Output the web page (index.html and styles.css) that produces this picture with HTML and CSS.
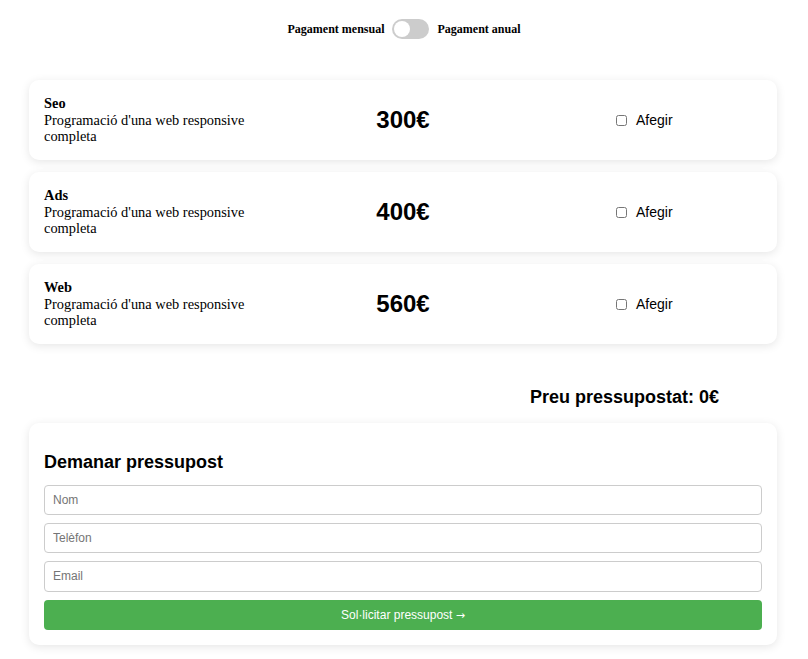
FILE: index.html
```html
<!DOCTYPE html>
<html lang="ca">
<head>
<meta charset="utf-8">
<title>Pressupost</title>
<link rel="stylesheet" href="styles.css">
</head>
<body>
<div class="page">
  <div class="billing">
    <span class="billing-label">Pagament mensual</span>
    <span class="switch"><span class="knob"></span></span>
    <span class="billing-label">Pagament anual</span>
  </div>

  <div class="services">
    <div class="card service">
      <div class="service-info">
        <div class="service-name">Seo</div>
        <div class="service-desc">Programació d'una web responsive completa</div>
      </div>
      <div class="service-price">300€</div>
      <label class="service-add"><input type="checkbox" class="check"> Afegir</label>
    </div>
    <div class="card service">
      <div class="service-info">
        <div class="service-name">Ads</div>
        <div class="service-desc">Programació d'una web responsive completa</div>
      </div>
      <div class="service-price">400€</div>
      <label class="service-add"><input type="checkbox" class="check"> Afegir</label>
    </div>
    <div class="card service">
      <div class="service-info">
        <div class="service-name">Web</div>
        <div class="service-desc">Programació d'una web responsive completa</div>
      </div>
      <div class="service-price">560€</div>
      <label class="service-add"><input type="checkbox" class="check"> Afegir</label>
    </div>
  </div>

  <div class="total">Preu pressupostat: 0€</div>

  <form class="card request">
    <h2 class="request-title">Demanar pressupost</h2>
    <input class="field" type="text" placeholder="Nom">
    <input class="field" type="text" placeholder="Telèfon">
    <input class="field" type="text" placeholder="Email">
    <button class="submit" type="button">Sol·licitar pressupost <span class="arrow">→</span></button>
  </form>
</div>
</body>
</html>
```

FILE: styles.css
```css
html, body {
  margin: 0;
  padding: 0;
  background: #fff;
}

body {
  font-family: "Liberation Serif", "Times New Roman", serif;
  color: #000;
}

.page {
  width: 748px;
  margin: 0 31px 0 29px;
  padding-top: 19px;
  padding-bottom: 14px;
}

.billing {
  display: flex;
  align-items: center;
  justify-content: center;
  gap: 8px;
  height: 20px;
  padding-left: 2px;
}

.billing-label {
  font-weight: bold;
  font-size: 12px;
}

.switch {
  position: relative;
  display: inline-block;
  width: 37px;
  height: 20px;
  border-radius: 10px;
  background: #ccc;
}

.knob {
  position: absolute;
  left: 2px;
  top: 2px;
  width: 16px;
  height: 16px;
  border-radius: 50%;
  background: #fff;
}

.services {
  margin-top: 41px;
  display: flex;
  flex-direction: column;
  gap: 12px;
}

.card {
  background: #fff;
  border-radius: 10px;
  box-shadow: 0 2px 10px rgba(0, 0, 0, 0.1);
}

.service {
  display: grid;
  grid-template-columns: 1fr 1fr 1fr;
  align-items: center;
  padding: 15px;
  height: 50px;
}

.service-info {
  font-size: 14.4px;
  line-height: 16.5px;
}

.service-name {
  font-weight: bold;
}

.service-price {
  text-align: center;
  font-family: "Liberation Sans", Arial, sans-serif;
  font-weight: bold;
  font-size: 24px;
}

.service-add {
  display: flex;
  align-items: center;
  justify-content: center;
  font-family: "Liberation Sans", Arial, sans-serif;
  font-size: 14px;
  padding-left: 4px;
}

.check {
  margin: 0 9px 0 0;
  width: 11px;
  height: 11px;
}

.total {
  margin-top: 43px;
  height: 21px;
  font-family: "Liberation Sans", Arial, sans-serif;
  font-weight: bold;
  font-size: 18px;
  text-align: right;
  padding-right: 58px;
}

.request {
  margin-top: 15px;
  padding: 15px;
  display: flex;
  flex-direction: column;
  gap: 8px;
}

.request-title {
  margin: 14px 0 4px;
  font-family: "Liberation Sans", Arial, sans-serif;
  font-size: 18px;
  line-height: 21px;
  font-weight: bold;
}

.field {
  box-sizing: border-box;
  height: 30.2px;
  border: 1px solid #ccc;
  border-radius: 4px;
  padding: 0 8px;
  font-family: "Liberation Sans", Arial, sans-serif;
  font-size: 12px;
  color: #333;
  outline: none;
}

.field::placeholder {
  color: #757575;
}

.submit {
  height: 30px;
  border: none;
  border-radius: 4px;
  background: #4caf50;
  color: #fff;
  font-family: "Liberation Sans", Arial, sans-serif;
  font-size: 12px;
  cursor: pointer;
}

.arrow {
  font-family: "DejaVu Sans", sans-serif;
  font-size: 11px;
}
```
